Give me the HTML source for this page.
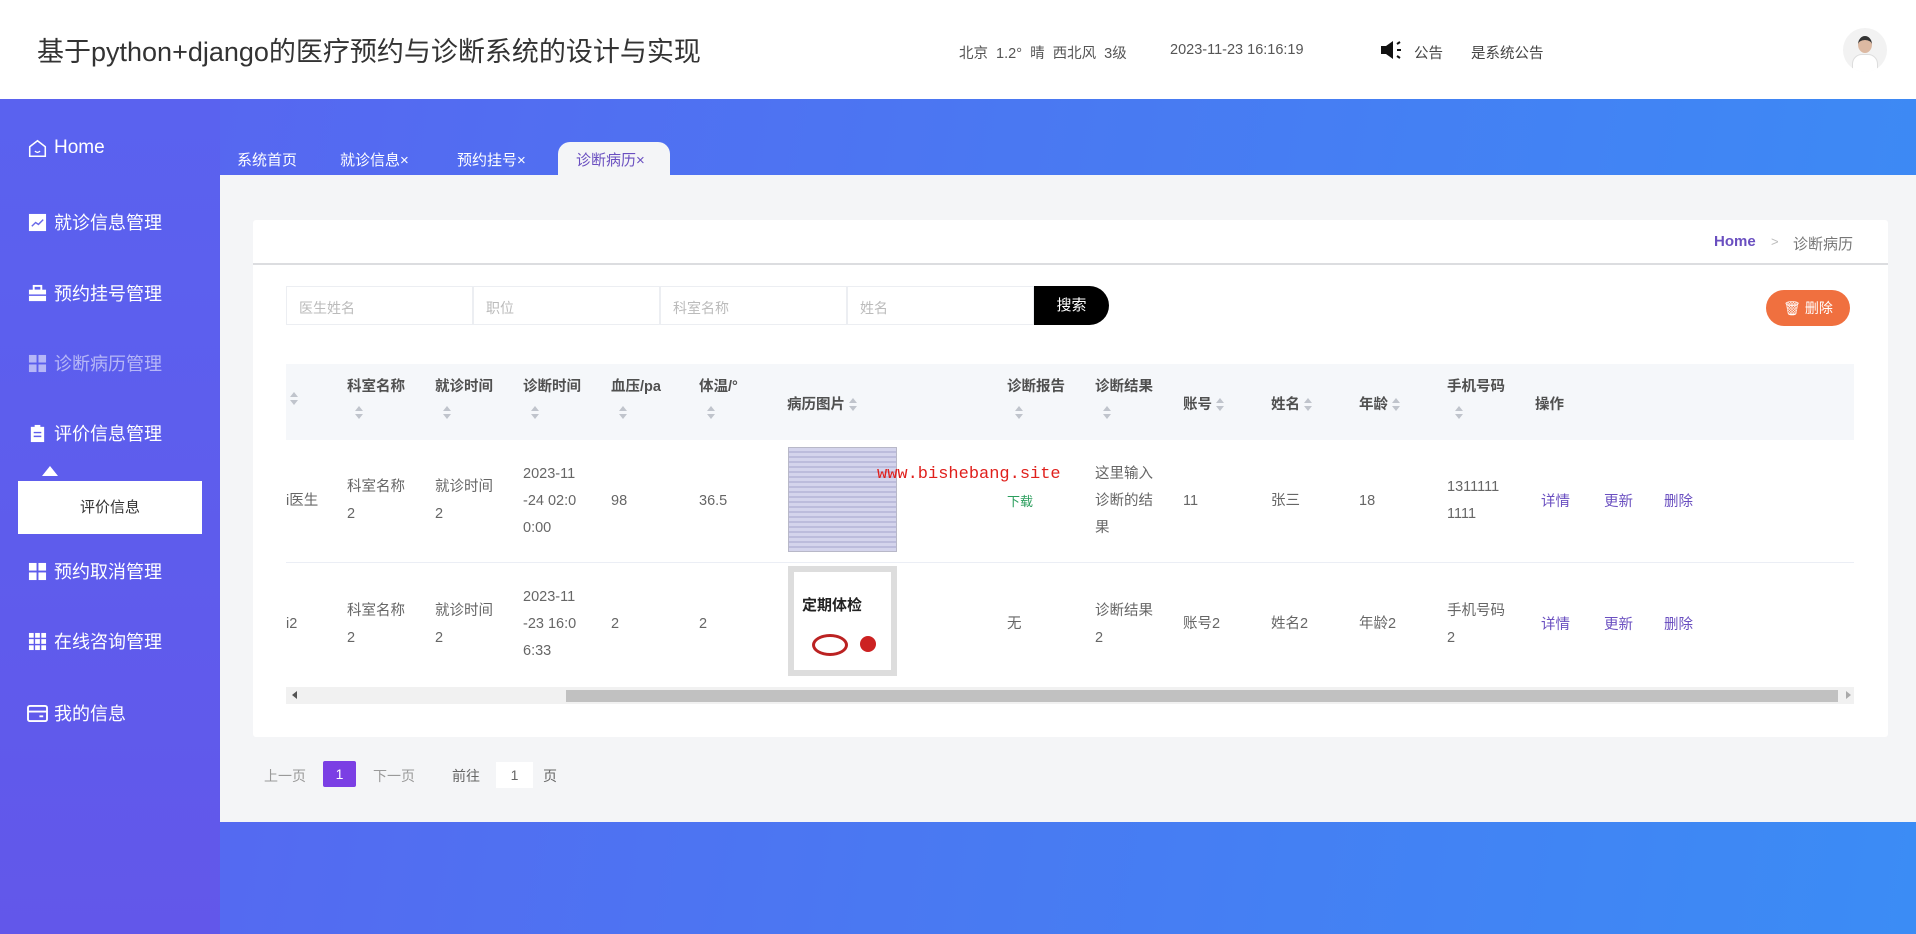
<!DOCTYPE html>
<html><head><meta charset="utf-8"><style>
*{margin:0;padding:0;box-sizing:border-box}
body{width:1916px;height:934px;overflow:hidden;font-family:"Liberation Sans","Noto Sans CJK SC",sans-serif;background:linear-gradient(100deg,#5a62f0 0%,#4a78f2 50%,#3b8cf5 100%);position:relative;color:#606266}
.a{position:absolute;white-space:nowrap}
#hdr{position:absolute;left:0;top:0;width:1916px;height:99px;background:#fff}
#side{position:absolute;left:0;top:99px;width:220px;height:835px;background:linear-gradient(180deg,#5a62ef 0%,#6257ea 100%)}
.mi{position:absolute;left:27px;color:#fff;font-size:18px;display:flex;align-items:center;gap:6px}
.ic{width:21px;height:19px;display:inline-block}
#main{position:absolute;left:220px;top:175px;width:1696px;height:647px;background:#f4f5f7}
.tab{position:absolute;top:149px;color:#fff;font-size:15px}
#card{position:absolute;left:253px;top:220px;width:1635px;height:517px;background:#fff;border-radius:3px}
.inp{position:absolute;top:286px;height:39px;width:187px;border:1px solid #eceef2;background:#fff;color:#bbb;font-size:14px;padding:11px 12px}
.th{position:absolute;font-size:14.5px;color:#505050;font-weight:600}
.td{position:absolute;font-size:14.5px;color:#666;line-height:27px}
.car{display:inline-block;width:8px;height:14px;vertical-align:middle;margin-left:4px;position:relative}
.car:before{content:"";position:absolute;left:0;top:0;border:4px solid transparent;border-bottom:5px solid #c0c4cc;border-top:0}
.car:after{content:"";position:absolute;left:0;top:8px;border:4px solid transparent;border-top:5px solid #c0c4cc;border-bottom:0}
.op{position:absolute;font-size:14.5px;color:#6a4fc0}
</style></head><body>
<div id="hdr">
<div class="a" style="left:37px;top:30px;font-size:27px;color:#333">基于python+django的医疗预约与诊断系统的设计与实现</div>
<div class="a" style="left:959px;top:42px;font-size:14.5px;color:#555">北京&nbsp; 1.2°&nbsp; 晴&nbsp; 西北风&nbsp; 3级</div>
<div class="a" style="left:1170px;top:42px;font-size:14.5px;color:#555">2023-11-23 16:16:19</div>
<svg class="a" style="left:1380px;top:40px" width="26" height="20" viewBox="0 0 26 20"><path d="M1 6h5l7-5v18l-7-5H1z" fill="#111"/><path d="M17 4l3-2M17 10h4M17 16l3 2" stroke="#111" stroke-width="2"/></svg>
<div class="a" style="left:1414px;top:42px;font-size:14.5px;color:#444">公告</div>
<div class="a" style="left:1471px;top:42px;font-size:14.5px;color:#444">是系统公告</div>
<div class="a" style="left:1843px;top:28px;width:44px;height:44px;border-radius:50%;background:#f2f2f2;overflow:hidden"><div class="a" style="left:15px;top:8px;width:14px;height:17px;border-radius:50%;background:#dcb9a2;border-top:4px solid #333"></div><div class="a" style="left:9px;top:26px;width:26px;height:20px;border-radius:10px 10px 0 0;background:#fff;border:1px solid #ddd"></div></div>
</div>
<div id="side">
<div class="mi" style="top:38px"><svg class="ic" viewBox="0 0 22 22"><path d="M2 9L11 2l9 7v11H2z" fill="none" stroke="#fff" stroke-width="1.8"/><path d="M8 14q3 3 6 0" fill="none" stroke="#fff" stroke-width="1.5"/></svg><span style="font-size:19px">Home</span></div>
<div class="mi" style="top:110px"><svg class="ic" viewBox="0 0 20 20"><rect x="1" y="1" width="18" height="18" fill="#fff"/><path d="M4 14l4-4 3 2 5-5" stroke="#6a6ae8" stroke-width="1.5" fill="none"/></svg>就诊信息管理</div>
<div class="mi" style="top:181px"><svg class="ic" viewBox="0 0 20 20"><rect x="1" y="6" width="18" height="12" fill="#fff"/><rect x="6" y="2" width="8" height="5" fill="none" stroke="#fff" stroke-width="2"/><rect x="1" y="11" width="18" height="1.5" fill="#5e5ded"/></svg>预约挂号管理</div>
<div class="mi" style="top:251px;color:rgba(255,255,255,.55)"><svg class="ic" viewBox="0 0 20 20" fill="rgba(255,255,255,.55)"><rect x="1" y="1" width="8" height="8"/><rect x="11" y="1" width="8" height="8"/><rect x="1" y="11" width="8" height="8"/><rect x="11" y="11" width="8" height="8"/></svg>诊断病历管理</div>
<div class="mi" style="top:321px"><svg class="ic" viewBox="0 0 20 20"><rect x="3" y="3" width="14" height="16" fill="#fff"/><rect x="7" y="1" width="6" height="4" fill="#fff"/><path d="M6 9h8M6 13h8" stroke="#5e5ded" stroke-width="1.5"/></svg>评价信息管理</div>
<div class="a" style="left:42px;top:367px;border:8px solid transparent;border-bottom:10px solid #fff;border-top:0"></div>
<div class="a" style="left:18px;top:382px;width:184px;height:53px;background:#fff;color:#333;font-size:15px;text-align:center;line-height:53px">评价信息</div>
<div class="mi" style="top:459px"><svg class="ic" viewBox="0 0 20 20" fill="#fff"><rect x="1" y="1" width="8" height="8"/><rect x="11" y="1" width="8" height="8"/><rect x="1" y="11" width="8" height="8"/><rect x="11" y="11" width="8" height="8"/></svg>预约取消管理</div>
<div class="mi" style="top:529px"><svg class="ic" viewBox="0 0 20 20" fill="#fff"><rect x="1" y="1" width="5" height="5"/><rect x="7.5" y="1" width="5" height="5"/><rect x="14" y="1" width="5" height="5"/><rect x="1" y="7.5" width="5" height="5"/><rect x="7.5" y="7.5" width="5" height="5"/><rect x="14" y="7.5" width="5" height="5"/><rect x="1" y="14" width="5" height="5"/><rect x="7.5" y="14" width="5" height="5"/><rect x="14" y="14" width="5" height="5"/></svg>在线咨询管理</div>
<div class="mi" style="top:601px"><svg class="ic" viewBox="0 0 22 20"><rect x="1" y="2" width="20" height="16" rx="2" fill="none" stroke="#fff" stroke-width="2"/><path d="M1 8h20M13 13h4" stroke="#fff" stroke-width="2"/></svg>我的信息</div>
</div>
<div class="tab" style="left:237px">系统首页</div>
<div class="tab" style="left:340px">就诊信息×</div>
<div class="tab" style="left:457px">预约挂号×</div>
<div class="a" style="left:558px;top:142px;width:112px;height:34px;background:#f4f5f7;border-radius:12px 12px 0 0;color:#6a4fc0;font-size:15px;padding:7px 0 0 18px">诊断病历×</div>
<div id="main"></div>
<div id="card"></div>
<div class="a" style="left:253px;top:263px;width:1635px;height:2px;background:#dcdde0"></div>
<div class="a" style="left:1714px;top:233px;font-size:15px;color:#6a4fc0;font-weight:bold">Home</div>
<div class="a" style="left:1771px;top:234px;font-size:13px;color:#bbb">&gt;</div>
<div class="a" style="left:1793px;top:233px;font-size:15px;color:#777">诊断病历</div>
<div class="inp" style="left:286px">医生姓名</div>
<div class="inp" style="left:473px">职位</div>
<div class="inp" style="left:660px">科室名称</div>
<div class="inp" style="left:847px">姓名</div>
<div class="a" style="left:1034px;top:286px;width:75px;height:39px;background:#000;color:#fff;font-size:15px;border-radius:0 20px 20px 0;text-align:center;line-height:39px">搜索</div>
<div class="a" style="left:1766px;top:290px;width:84px;height:36px;background:#f0703f;border-radius:18px;color:#fff;font-size:14px;text-align:center;line-height:36px">🗑 删除</div>
<div class="a" style="left:286px;top:364px;width:1568px;height:76px;background:#f5f7fa"></div>
<div class="a" style="left:286px;top:562px;width:1568px;height:1px;background:#ebeef5"></div>
<div class="a" style="left:286px;top:687px;width:1568px;height:17px;background:#f1f1f1"></div>
<div class="a" style="left:566px;top:690px;width:1272px;height:12px;background:#c1c1c1"></div>
<div class="a" style="left:292px;top:691px;border:4px solid transparent;border-right:5px solid #555;border-left:0"></div>
<div class="a" style="left:1846px;top:691px;border:4px solid transparent;border-left:5px solid #aaa;border-right:0"></div>
<div class="th" style="left:286px;top:391px"><span class="car"></span></div>
<div class="th" style="left:347px;top:375px">科室名称<br><span class="car" style="margin:10px 0 0 8px"></span></div>
<div class="th" style="left:435px;top:375px">就诊时间<br><span class="car" style="margin:10px 0 0 8px"></span></div>
<div class="th" style="left:523px;top:375px">诊断时间<br><span class="car" style="margin:10px 0 0 8px"></span></div>
<div class="th" style="left:611px;top:375px">血压/pa<br><span class="car" style="margin:10px 0 0 8px"></span></div>
<div class="th" style="left:699px;top:375px">体温/°<br><span class="car" style="margin:10px 0 0 8px"></span></div>
<div class="th" style="left:787px;top:393px">病历图片<span class="car"></span></div>
<div class="th" style="left:1007px;top:375px">诊断报告<br><span class="car" style="margin:10px 0 0 8px"></span></div>
<div class="th" style="left:1095px;top:375px">诊断结果<br><span class="car" style="margin:10px 0 0 8px"></span></div>
<div class="th" style="left:1183px;top:393px">账号<span class="car"></span></div>
<div class="th" style="left:1271px;top:393px">姓名<span class="car"></span></div>
<div class="th" style="left:1359px;top:393px">年龄<span class="car"></span></div>
<div class="th" style="left:1447px;top:375px">手机号码<br><span class="car" style="margin:10px 0 0 8px"></span></div>
<div class="th" style="left:1535px;top:393px">操作</div>
<div class="td" style="left:286px;top:488px">i医生</div>
<div class="td" style="left:347px;top:474px">科室名称<br>2</div>
<div class="td" style="left:435px;top:474px">就诊时间<br>2</div>
<div class="td" style="left:523px;top:461px">2023-11<br>-24 02:0<br>0:00</div>
<div class="td" style="left:611px;top:488px">98</div>
<div class="td" style="left:699px;top:488px">36.5</div>
<div class="a" style="left:788px;top:447px;width:109px;height:105px;background:repeating-linear-gradient(180deg,#d4d4ec 0 3px,#bcbcdc 3px 5px);border:1px solid #b8b8c8"></div>
<div class="a" style="left:877px;top:465px;font-family:'Liberation Mono',monospace;font-size:17px;color:#e0201c">www.bishebang.site</div>
<div class="td" style="left:1007px;top:488px;font-size:13px;color:#2a9d5c">下载</div>
<div class="td" style="left:1095px;top:461px">这里输入<br>诊断的结<br>果</div>
<div class="td" style="left:1183px;top:488px">11</div>
<div class="td" style="left:1271px;top:488px">张三</div>
<div class="td" style="left:1359px;top:488px">18</div>
<div class="td" style="left:1447px;top:474px">1311111<br>1111</div>
<div class="op" style="left:1541px;top:490px">详情</div><div class="op" style="left:1604px;top:490px">更新</div><div class="op" style="left:1664px;top:490px">删除</div>
<div class="td" style="left:286px;top:611px">i2</div>
<div class="td" style="left:347px;top:598px">科室名称<br>2</div>
<div class="td" style="left:435px;top:598px">就诊时间<br>2</div>
<div class="td" style="left:523px;top:584px">2023-11<br>-23 16:0<br>6:33</div>
<div class="td" style="left:611px;top:611px">2</div>
<div class="td" style="left:699px;top:611px">2</div>
<div class="a" style="left:788px;top:566px;width:109px;height:110px;background:#ddd;padding:6px"><div style="background:#fff;height:98px;position:relative"><div class="a" style="left:8px;top:22px;font-size:15px;font-weight:bold;color:#222">定期体检</div><div class="a" style="left:18px;top:62px;width:36px;height:22px;border:3px solid #b22;border-radius:50%"></div><div class="a" style="left:66px;top:64px;width:16px;height:16px;background:#c22;border-radius:50%"></div></div></div>
<div class="td" style="left:1007px;top:611px">无</div>
<div class="td" style="left:1095px;top:598px">诊断结果<br>2</div>
<div class="td" style="left:1183px;top:611px">账号2</div>
<div class="td" style="left:1271px;top:611px">姓名2</div>
<div class="td" style="left:1359px;top:611px">年龄2</div>
<div class="td" style="left:1447px;top:598px">手机号码<br>2</div>
<div class="op" style="left:1541px;top:613px">详情</div><div class="op" style="left:1604px;top:613px">更新</div><div class="op" style="left:1664px;top:613px">删除</div>
<div class="a" style="left:264px;top:766px;font-size:14px;color:#999">上一页</div>
<div class="a" style="left:323px;top:761px;width:33px;height:26px;background:#7b3fe4;border-radius:2px;color:#fff;font-size:14px;text-align:center;line-height:26px">1</div>
<div class="a" style="left:373px;top:766px;font-size:14px;color:#999">下一页</div>
<div class="a" style="left:452px;top:766px;font-size:14px;color:#666">前往</div>
<div class="a" style="left:496px;top:762px;width:37px;height:26px;background:#fff;font-size:14px;text-align:center;line-height:26px;color:#666">1</div>
<div class="a" style="left:543px;top:766px;font-size:14px;color:#666">页</div>
</body></html>
